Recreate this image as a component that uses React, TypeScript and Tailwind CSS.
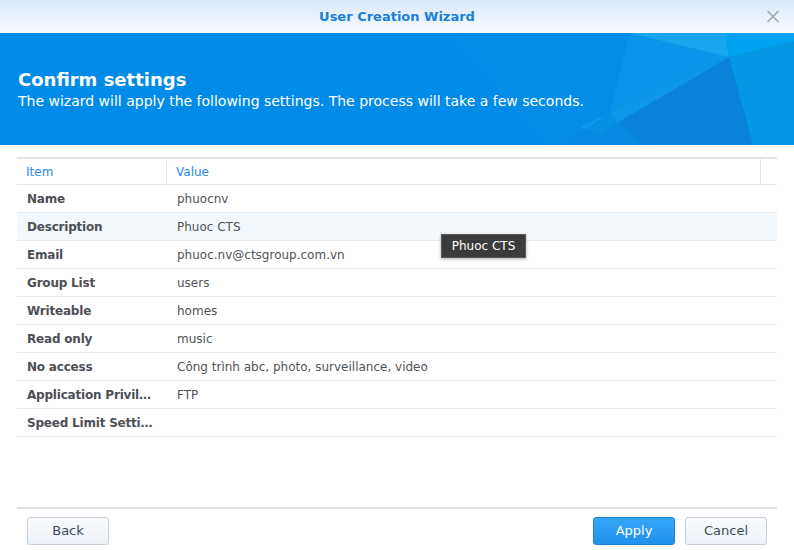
import React from "react";

const rows: { item: string; value: string }[] = [
  { item: "Name", value: "phuocnv" },
  { item: "Description", value: "Phuoc CTS" },
  { item: "Email", value: "phuoc.nv@ctsgroup.com.vn" },
  { item: "Group List", value: "users" },
  { item: "Writeable", value: "homes" },
  { item: "Read only", value: "music" },
  { item: "No access", value: "Công trình abc, photo, surveillance, video" },
  { item: "Application Privil…", value: "FTP" },
  { item: "Speed Limit Setti…", value: "" },
];

const font = { fontFamily: '"DejaVu Sans", Verdana, sans-serif' };

export default function App() {
  return (
    <div className="relative flex h-[550px] w-[794px] flex-col overflow-hidden bg-white" style={font}>
      {/* Title bar */}
      <div className="relative flex h-[33px] shrink-0 items-center justify-center bg-gradient-to-b from-[#d8e9f9] to-[#f8fbfe]">
        <span className="text-[13px] font-bold text-[#1a7fd9]">User Creation Wizard</span>
        <svg className="absolute right-[14px] top-[10px]" width="14" height="13" viewBox="0 0 14 13">
          <path d="M1.5 1 L12.5 12 M12.5 1 L1.5 12" stroke="#a3a8ad" strokeWidth="1.6" />
        </svg>
      </div>

      {/* Banner */}
      <div className="relative h-[112px] shrink-0 overflow-hidden bg-[#008be9]">
        <svg className="absolute inset-0" width="794" height="112" viewBox="0 0 794 112">
          <polygon points="450,0 794,0 794,112 545,112" fill="#0a93ec" opacity="0.35" />
          <polygon points="630,0 725,0 729,24 610,80" fill="#0d9cee" opacity="0.6" />
          <polygon points="630,0 725,0 729,24" fill="#1aa6ee" />
          <polygon points="725,0 794,0 794,8 729,24" fill="#00a2f2" />
          <polygon points="729,24 794,8 794,112 753,112" fill="#0597e4" />
          <polygon points="729,24 753,112 642,112 610,80" fill="#0883d9" />
          <polygon points="729,24 610,80 580,94 600,100" fill="#10a8f0" opacity="0.6" />
          <polygon points="610,80 642,112 560,112" fill="#0687df" opacity="0.6" />
        </svg>
        <div className="relative pl-[18px] pt-[35px] text-white">
          <div className="text-[18px] font-bold leading-[24px]">Confirm settings</div>
          <div className="text-[14px] leading-[18px]">
            The wizard will apply the following settings. The process will take a few seconds.
          </div>
        </div>
      </div>

      {/* Table */}
      <div className="mx-[17px] mt-[12px] flex-1">
        <div className="flex h-[28px] border-t-2 border-b border-t-[#dfe5eb] border-b-[#e3eaf1] text-[12px] text-[#2a8ae6]">
          <div className="flex w-[150px] items-center border-r border-[#dde7f0] pl-[9px]">Item</div>
          <div className="flex flex-1 items-center border-r border-[#dde7f0] pl-[9px]">Value</div>
          <div className="w-[16px]" />
        </div>
        {rows.map((r, i) => (
          <div
            key={r.item}
            className={`flex h-[28px] items-center border-b border-[#e6edf3] text-[12px] ${i === 1 ? "bg-[#f3f8fd]" : ""}`}
          >
            <div className="w-[150px] pl-[10px] font-bold tracking-[-0.2px] text-[#4c4f55]">{r.item}</div>
            <div className="flex-1 pl-[10px] text-[#505358]">{r.value}</div>
          </div>
        ))}
      </div>

      {/* Footer */}
      <div className="mx-[17px] h-[2px] bg-[#e2e2e2]" />
      <div className="flex h-[41px] items-start justify-between px-[27px] pt-[8px]">
        <button className="h-[28px] w-[82px] rounded-[3px] border border-[#c6d1dc] bg-gradient-to-b from-[#fafcfe] to-[#ebf1f6] text-[13px] text-[#3d4b5a]">
          Back
        </button>
        <div className="flex gap-[10px]">
          <button className="h-[28px] w-[82px] rounded-[3px] border border-[#1c84d6] bg-gradient-to-b from-[#35a7f7] to-[#1f90ec] text-[13px] text-white">
            Apply
          </button>
          <button className="h-[28px] w-[82px] rounded-[3px] border border-[#c6d1dc] bg-gradient-to-b from-[#fafcfe] to-[#ebf1f6] text-[13px] text-[#3d4b5a]">
            Cancel
          </button>
        </div>
      </div>

      {/* Tooltip */}
      <div className="absolute left-[441px] top-[234px] flex h-[24px] w-[85px] items-center justify-center border border-[#5a5a5a] bg-[#3b3b3b] text-[12px] text-white shadow-[0_1px_3px_rgba(0,0,0,0.35)]">
        Phuoc CTS
      </div>
    </div>
  );
}
